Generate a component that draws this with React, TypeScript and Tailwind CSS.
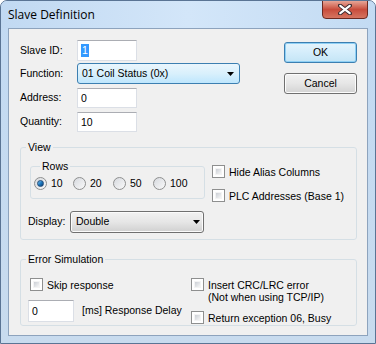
import React from "react";

const font = { fontFamily: '"Liberation Sans", Arial, sans-serif' };

function Arrow() {
    return (
        <svg width="7" height="4" viewBox="0 0 7 4">
            <path d="M0 0H7L3.5 4Z" fill="#000" />
        </svg>
    );
}

function Checkbox({ label }: { label: React.ReactNode }) {
    return (
        <div className="flex items-start gap-[4px]">
            <div className="w-[13px] h-[13px] shrink-0 border border-[#8e8f8f] bg-white p-[2px]">
                <div className="w-full h-full bg-gradient-to-br from-[#cbcfd5] to-[#f6f6f6] border border-[#f4f4f4]" />
            </div>
            <div className="leading-[12px] mt-[1px]">{label}</div>
        </div>
    );
}

function Radio({ checked, label, w }: { checked?: boolean; label: string; w: string }) {
    return (
        <div className={`flex items-center gap-[4px] ${w}`}>
            <div className="w-[13px] h-[13px] rounded-full border border-[#8e8f8f] bg-gradient-to-br from-[#d6d9de] to-[#fafafa] flex items-center justify-center">
                {checked && (
                    <div className="w-[7px] h-[7px] rounded-full bg-gradient-to-br from-[#7ac4ef] via-[#1d7ac1] to-[#0b3d72] border border-[#1f4a78]" />
                )}
            </div>
            <span className="leading-[13px]">{label}</span>
        </div>
    );
}

function TextBox({ w, h, children }: { w: string; h: string; children?: React.ReactNode }) {
    return (
        <div className={`${w} ${h} bg-white border border-[#dbdfe6] border-t-[#abadb3] flex items-center pl-[3px] leading-none`}>
            {children}
        </div>
    );
}

export default function App() {
    return (
        <div
            className="w-[376px] h-[344px] border border-[#5a7494] rounded-t-[7px] bg-gradient-to-b from-[#c2daf3] to-[#c8dbee] flex flex-col overflow-hidden text-[10.5px] text-black"
            style={font}
        >
            {/* Title bar */}
            <div className="h-[27px] flex items-start bg-gradient-to-r from-[#c1d9f2] via-[#d3e6f9] to-[#c3dbf3] pl-[7px] pr-[7px]">
                <span
                    className="mt-[6px] text-[12px] leading-[16px] text-black"
                    style={{ fontFamily: '"Open Sans", "Noto Sans", sans-serif' }}
                >
                    Slave Definition
                </span>
                <div className="ml-auto w-[46px] h-[19px] -mt-px rounded-b-[4px] border border-[#6b2a22] bg-gradient-to-b from-[#e6a597] via-[#c84c3c] to-[#d57461] flex items-center justify-center">
                    <svg width="14" height="11" viewBox="0 0 14 11">
                        <path d="M2 1.5L12 9.5M12 1.5L2 9.5" stroke="#3b2b30" strokeWidth="4" strokeLinecap="round" />
                        <path d="M2.3 1.8L11.7 9.2M11.7 1.8L2.3 9.2" stroke="#fff" strokeWidth="2.2" strokeLinecap="round" />
                    </svg>
                </div>
            </div>

            {/* Client area */}
            <div className="mx-[7px] h-[308px] border border-[#8da3bd] bg-[#f0f0f0] pt-[11px] pl-[11px] flex flex-col">
                {/* Top */}
                <div className="flex items-start">
                    <div className="flex flex-col w-[220px]">
                        <div className="flex items-center h-[21px]">
                            <span className="w-[57px]">Slave ID:</span>
                            <TextBox w="w-[60px]" h="h-[21px]">
                                <span className="bg-[#3399ff] text-white px-px leading-[13px]">1</span>
                            </TextBox>
                        </div>
                        <div className="flex items-center h-[21px] mt-[2px]">
                            <span className="w-[57px]">Function:</span>
                            <div className="w-[163px] h-[21px] rounded-[3px] border border-[#3c7fb1] bg-gradient-to-b from-[#eaf6fd] via-[#d9f0fc] to-[#bee6fd] flex items-center pl-[4px] pr-[5px]">
                                <span>01 Coil Status (0x)</span>
                                <span className="ml-auto">
                                    <Arrow />
                                </span>
                            </div>
                        </div>
                        <div className="flex items-center h-[20px] mt-[4px]">
                            <span className="w-[57px]">Address:</span>
                            <TextBox w="w-[60px]" h="h-[20px]">0</TextBox>
                        </div>
                        <div className="flex items-center h-[20px] mt-[4px]">
                            <span className="w-[57px]">Quantity:</span>
                            <TextBox w="w-[60px]" h="h-[20px]">10</TextBox>
                        </div>
                    </div>
                    <div className="ml-[44px] mt-[2px] flex flex-col gap-[10px]">
                        <button className="w-[73px] h-[21px] rounded-[3px] border border-[#3c7fb1] bg-gradient-to-b from-[#e5f4fc] via-[#d4edfb] to-[#c4e5f6] shadow-[inset_0_0_0_1px_#8fd0f5] leading-none">
                            OK
                        </button>
                        <button className="w-[73px] h-[21px] rounded-[3px] border border-[#707070] bg-gradient-to-b from-[#f2f2f2] via-[#e6e6e6] to-[#d3d3d3] shadow-[inset_0_0_0_1px_#fcfcfc] leading-none">
                            Cancel
                        </button>
                    </div>
                </div>

                {/* View */}
                <fieldset className="mt-[9px] w-[337px] border border-[#d5dfe5] rounded-[3px] pb-[6px]">
                    <legend className="ml-[5px] px-[2px] leading-[12px]">View</legend>
                    <div className="flex items-start">
                        <fieldset className="ml-[9px] mt-[7px] w-[175px] border border-[#d5dfe5] rounded-[3px] pl-[3px] pb-[8px]">
                            <legend className="ml-[6px] px-[2px] leading-[12px]">Rows</legend>
                            <div className="flex mt-[5px]">
                                <Radio checked label="10" w="w-[39px]" />
                                <Radio label="20" w="w-[40px]" />
                                <Radio label="50" w="w-[40px]" />
                                <Radio label="100" w="w-[40px]" />
                            </div>
                        </fieldset>
                        <div className="ml-[7px] mt-[12px] flex flex-col gap-[11px]">
                            <Checkbox label="Hide Alias Columns" />
                            <Checkbox label="PLC Addresses (Base 1)" />
                        </div>
                    </div>
                    <div className="flex items-center mt-[9px] ml-[7px]">
                        <span className="w-[42px]">Display:</span>
                        <div className="w-[134px] h-[22px] rounded-[3px] border border-[#707070] bg-gradient-to-b from-[#f2f2f2] via-[#e6e6e6] to-[#d0d0d0] shadow-[inset_0_0_0_1px_#fbfbfb] flex items-center pl-[5px] pr-[3px]">
                            <span>Double</span>
                            <span className="ml-auto">
                                <Arrow />
                            </span>
                        </div>
                    </div>
                </fieldset>

                {/* Error Simulation */}
                <fieldset className="mt-[13px] w-[337px] border border-[#d5dfe5] rounded-[3px] pb-[1px]">
                    <legend className="ml-[5px] px-[2px] leading-[12px]">Error Simulation</legend>
                    <div className="flex items-start">
                        <div className="w-[170px] flex flex-col">
                            <div className="ml-[9px] mt-[13px]">
                                <Checkbox label="Skip response" />
                            </div>
                            <div className="ml-[7px] mt-[9px] flex items-center gap-[8px]">
                                <TextBox w="w-[46px]" h="h-[22px]">0</TextBox>
                                <span>[ms] Response Delay</span>
                            </div>
                        </div>
                        <div className="mt-[13px] flex flex-col gap-[8px]">
                            <Checkbox
                                label={
                                    <>
                                        Insert CRC/LRC error
                                        <br />
                                        (Not when using TCP/IP)
                                    </>
                                }
                            />
                            <Checkbox label="Return exception 06, Busy" />
                        </div>
                    </div>
                </fieldset>
            </div>
        </div>
    );
}
